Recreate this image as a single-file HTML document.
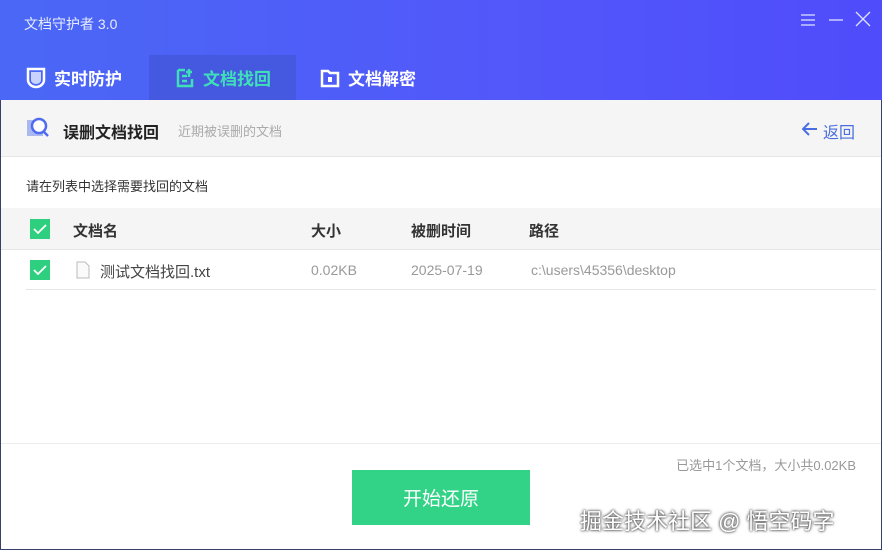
<!DOCTYPE html>
<html><head><meta charset="utf-8"><style>
*{margin:0;padding:0;box-sizing:border-box}
body{width:882px;height:550px;overflow:hidden;font-family:"Liberation Sans","Noto Sans CJK SC",sans-serif;background:#fff;position:relative}
.win{position:absolute;inset:0;border:1px solid #3a3f6a;}
.hdr{position:absolute;left:0;top:0;width:882px;height:100px;background:linear-gradient(90deg,#4a68f5,#5257fa 60%,#4f4cfb)}
.title{position:absolute;left:24px;top:14px;color:#e8ecff;font-size:14px}
.tab{position:absolute;top:55px;height:45px;display:flex;align-items:center;color:#fff;font-size:17px;font-weight:bold}
.tab.act{background:#4459e0;color:#3fe0b8}
.sub{position:absolute;left:1px;top:100px;width:880px;height:57px;background:#f5f5f5;border-bottom:1px solid #e6e6e6}
.abs{position:absolute}
.cb{position:absolute;width:20px;height:20px;background:#2ecf7f}
.cb svg{position:absolute;left:3px;top:4px}
</style></head><body>
<div class="win"></div>
<div class="hdr">
 <div class="title">文档守护者 3.0</div>
 <svg class="abs" style="left:800px;top:12px" width="16" height="16"><path d="M1 3h14M1 8h14M1 13h14" stroke="#dfe3ff" stroke-width="1.3"/></svg>
 <svg class="abs" style="left:828px;top:12px" width="16" height="16"><path d="M1 8h14" stroke="#dfe3ff" stroke-width="1.3"/></svg>
 <svg class="abs" style="left:855px;top:11px" width="16" height="16"><path d="M1 1l14 14M15 1L1 15" stroke="#dfe3ff" stroke-width="1.3"/></svg>
 <div class="tab" style="left:26px"><svg width="20" height="22" style="margin-right:8px"><path d="M2 2h16v11c0 4-4 7-8 7s-8-3-8-7z" fill="none" stroke="#fff" stroke-width="2.5"/><path d="M5 5h10v8c0 2-2 4-5 4s-5-2-5-4z" fill="#c9d2ff"/></svg>实时防护</div>
 <div class="tab act" style="left:149px;width:147px;padding-left:26px"><svg width="20" height="22" style="margin-right:8px"><path d="M3 3v16h14v-7M3 3h7M7 9h5M7 14h5M14 2v8M11 5h6" fill="none" stroke="#3fe0b8" stroke-width="2.5"/></svg>文档找回</div>
 <div class="tab" style="left:320px"><svg width="20" height="20" style="margin-right:8px"><path d="M2 3h6l2 2h8v13H2z" fill="none" stroke="#fff" stroke-width="2.5"/><rect x="8" y="9" width="4" height="5" fill="#fff"/></svg>文档解密</div>
</div>
<div class="sub">
 <svg class="abs" style="left:25px;top:16px" width="24" height="24"><rect x="1" y="4" width="16" height="16" fill="#aab8f0"/><circle cx="13" cy="10" r="7" fill="#fff" stroke="#4f6bf0" stroke-width="2.5"/><path d="M17 15l5 5" stroke="#4f6bf0" stroke-width="2.5"/></svg>
 <div class="abs" style="left:62px;top:19px;font-size:16px;font-weight:bold;color:#222">误删文档找回</div>
 <div class="abs" style="left:177px;top:21px;font-size:13px;color:#aaa">近期被误删的文档</div>
 <svg class="abs" style="left:801px;top:22px" width="16" height="14"><path d="M15 7H2M7 1L1 7l6 6" fill="none" stroke="#4a6ee0" stroke-width="2"/></svg>
 <div class="abs" style="left:822px;top:19px;font-size:16px;color:#4a6ee0">返回</div>
</div>
<div class="abs" style="left:26px;top:176px;font-size:13px;color:#333">请在列表中选择需要找回的文档</div>
<div class="abs" style="left:1px;top:208px;width:880px;height:42px;background:#f5f5f5;border-bottom:1px solid #e6e6e6"></div>
<div class="cb" style="left:30px;top:219px"><svg width="14" height="12"><path d="M1 6l4 4 8-8" fill="none" stroke="#fff" stroke-width="1.8"/></svg></div>
<div class="abs" style="left:73px;top:220px;font-size:15px;font-weight:bold;color:#333">文档名</div>
<div class="abs" style="left:311px;top:220px;font-size:15px;font-weight:bold;color:#333">大小</div>
<div class="abs" style="left:411px;top:220px;font-size:15px;font-weight:bold;color:#333">被删时间</div>
<div class="abs" style="left:529px;top:220px;font-size:15px;font-weight:bold;color:#333">路径</div>
<div class="cb" style="left:30px;top:260px"><svg width="14" height="12"><path d="M1 6l4 4 8-8" fill="none" stroke="#fff" stroke-width="1.8"/></svg></div>
<svg class="abs" style="left:76px;top:261px" width="14" height="18"><path d="M1 1h8l4 4v12H1z" fill="#fafafa" stroke="#bbb"/></svg>
<div class="abs" style="left:100px;top:261px;font-size:15px;color:#444">测试文档找回.txt</div>
<div class="abs" style="left:311px;top:262px;font-size:14px;color:#999">0.02KB</div>
<div class="abs" style="left:411px;top:262px;font-size:14px;color:#999">2025-07-19</div>
<div class="abs" style="left:531px;top:262px;font-size:14px;color:#999">c:\users\45356\desktop</div>
<div class="abs" style="left:26px;top:289px;width:850px;height:1px;background:#e6e6e6"></div>
<div class="abs" style="left:1px;top:443px;width:880px;height:1px;background:#ececec"></div>
<div class="abs" style="right:26px;top:455px;font-size:13px;color:#999">已选中1个文档，大小共0.02KB</div>
<div class="abs" style="left:352px;top:470px;width:178px;height:55px;background:#32d387;color:#fff;font-size:19px;display:flex;align-items:center;justify-content:center">开始还原</div>
<div class="abs" style="left:580px;top:504px;font-size:22px;color:#fff;text-shadow:0 0 3px #555,0 0 2px #333;white-space:nowrap">掘金技术社区 @ 悟空码字</div>
</body></html>
